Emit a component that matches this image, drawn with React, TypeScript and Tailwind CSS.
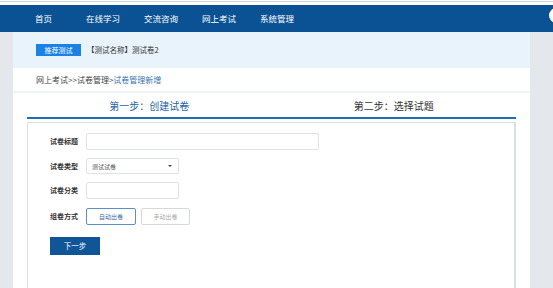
import React from "react";

const navItems = ["首页", "在线学习", "交流咨询", "网上考试", "系统管理"];

function Label({ children }: { children: React.ReactNode }) {
  return (
    <div className="w-[36px] shrink-0 text-[7px] font-bold text-[#333]">
      {children}
    </div>
  );
}

export default function App() {
  return (
    <div
      className="relative w-[553px] h-[288px] overflow-hidden bg-[#e4e8ec]"
      style={{ fontFamily: '"Noto Sans CJK SC", "Noto Sans", sans-serif' }}
    >
      {/* top strip */}
      <div className="h-[5px] bg-white pt-[1px]">
        <div className="h-[1px] bg-[#d4d6d8]" />
      </div>

      {/* nav */}
      <div className="relative flex h-[27px] items-center bg-[#0a5294] pl-[35px] text-[8.5px] text-white">
        {navItems.map((n, i) => (
          <span key={n} className={i === 0 ? "mr-[34px]" : "mr-[24px]"}>
            {n}
          </span>
        ))}
        <div className="absolute right-[-11px] top-[3px] h-[15px] w-[15px] rounded-full bg-white" />
      </div>

      {/* content column */}
      <div className="ml-[13px] w-[517px] h-[256px] bg-white">
        {/* banner */}
        <div className="flex h-[36px] items-center bg-[#e8f3fc] pl-[23px]">
          <span className="flex h-[12px] w-[45px] items-center justify-center bg-[#1a82e6] text-[7px] text-white">
            推荐测试
          </span>
          <span className="ml-[6px] text-[7.5px] text-[#333]">【测试名称】测试卷2</span>
        </div>

        {/* breadcrumb */}
        <div className="flex h-[25px] items-center border-b-2 border-[#f1f3f5] pl-[23px] text-[8px] text-[#444]">
          网上考试&gt;&gt;试卷管理&gt;<span className="text-[#3b72b0]">试卷管理新增</span>
        </div>

        {/* steps */}
        <div className="ml-[14px] w-[489px]">
          <div className="flex h-[26px] items-center border-b-2 border-[#1f6db3] text-[10px]">
            <div className="flex-1 text-center text-[#1f65a8]">第一步：创建试卷</div>
            <div className="flex-1 text-center text-[#333]">第二步：选择试题</div>
          </div>

          {/* form card */}
          <div className="mt-[3px] h-[170px] border border-r-2 border-[#dcdfe2] pl-[22px] pt-[10px]">
            <div className="flex h-[17px] items-center">
              <Label>试卷标题</Label>
              <div className="h-[17px] w-[233px] rounded-[2px] border border-[#dfe2e5]" />
            </div>

            <div className="mt-[8px] flex h-[16px] items-center">
              <Label>试卷类型</Label>
              <div className="flex h-[16px] w-[93px] items-center justify-between rounded-[2px] border border-[#dfe2e5] pl-[5px] pr-[6px] text-[6px] text-[#555]">
                <span>测试试卷</span>
                <span className="h-0 w-0 border-x-[2px] border-t-[2.5px] border-x-transparent border-t-[#444]" />
              </div>
            </div>

            <div className="mt-[8px] flex h-[17px] items-center">
              <Label>试卷分类</Label>
              <div className="h-[17px] w-[93px] rounded-[2px] border border-[#dfe2e5]" />
            </div>

            <div className="mt-[9px] flex h-[17px] items-center">
              <Label>组卷方式</Label>
              <div className="flex h-[17px] w-[50px] items-center justify-center rounded-[2px] border border-[#5b8fc6] text-[6px] text-[#3a6ea6]">
                自动出卷
              </div>
              <div className="ml-[5px] flex h-[17px] w-[49px] items-center justify-center rounded-[2px] border border-[#d6d9dc] text-[6px] text-[#aaa]">
                手动出卷
              </div>
            </div>

            <div className="mt-[12px] flex h-[18px] w-[50px] items-center justify-center bg-[#0f5597] text-[7.5px] text-white">
              下一步
            </div>
          </div>
        </div>
      </div>
    </div>
  );
}
